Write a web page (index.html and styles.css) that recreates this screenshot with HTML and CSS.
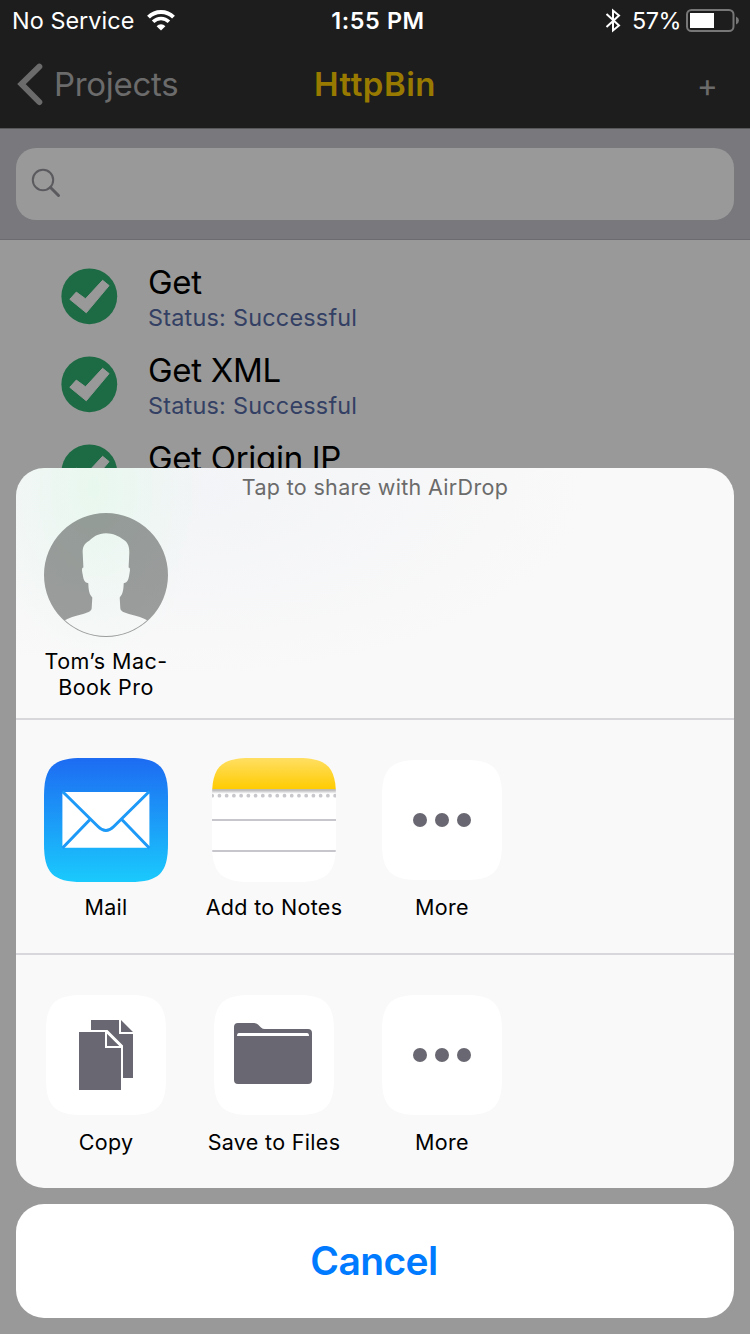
FILE: index.html
```html
<!DOCTYPE html>
<html lang="en">
<head>
<meta charset="utf-8">
<title>HttpBin</title>
<link rel="stylesheet" href="styles.css">
</head>
<body>
<div class="screen">
  <header class="header">
    <div class="status-bar">
      <div class="status-left">
        <span class="carrier">No Service</span>
        <svg class="wifi" width="28" height="21" viewBox="0 0 28 21" fill="none" stroke="#fff">
          <path d="M1.5 7.2A17.7 17.7 0 0 1 26.5 7.2" stroke-width="4"/>
          <path d="M6.1 11.8A11.2 11.2 0 0 1 21.9 11.8" stroke-width="3.6"/>
          <path d="M14 20.6L9.6 16.2A6.2 6.2 0 0 1 18.4 16.2Z" fill="#fff" stroke="none"/>
        </svg>
      </div>
      <span class="clock">1:55 PM</span>
      <div class="status-right">
        <svg class="bluetooth" width="16" height="26" viewBox="0 0 16 26" fill="none" stroke="#fff" stroke-width="2">
          <path d="M1.500 6L14 17.500L8 22.400V2.600L14 7.500L1.500 19"/>
        </svg>
        <span class="percent">57%</span>
        <svg class="battery" width="54" height="24" viewBox="0 0 54 24">
          <rect x="1" y="1" width="46.500" height="21" rx="4.500" fill="none" stroke="#777" stroke-width="2"/>
          <rect x="4" y="4" width="24" height="15" fill="#fff"/>
          <path d="M50 7.500Q53 9 53 11.500T50 15.500Z" fill="#777"/>
        </svg>
      </div>
    </div>
    <nav class="nav-bar">
      <div class="back">
        <svg width="26" height="44" viewBox="0 0 26 44" fill="none" stroke="#6b6b6b" stroke-width="6" stroke-linecap="round">
          <path d="M22.300 3.600L4.500 21L22.300 39"/>
        </svg>
        <span class="back-label">Projects</span>
      </div>
      <h1 class="title">HttpBin</h1>
      <span class="add">+</span>
    </nav>
  </header>

  <div class="search">
    <div class="field">
      <svg width="30" height="30" viewBox="0 0 30 30" fill="none" stroke="#5b5b5f">
        <circle cx="12" cy="12" r="10.200" stroke-width="2"/>
        <path d="M19.500 19.500L27.500 27.500" stroke-width="3" stroke-linecap="round"/>
      </svg>
    </div>
  </div>

  <main class="requests">
    <div class="request">
      <svg class="check" width="56" height="56" viewBox="-.3 -.3 56 56"><circle cx="28" cy="28" r="27.900" fill="#1d6b44"/><path d="M8.500 31L15 23.800L24.200 30.500L41.300 12L47.800 17.300L25 44.500Z" fill="#999" stroke="#999" stroke-linejoin="round"/></svg>
      <div class="request-text"><div class="request-name">Get</div><div class="request-status">Status: Successful</div></div>
    </div>
    <div class="request">
      <svg class="check" width="56" height="56" viewBox="-.3 -.3 56 56"><circle cx="28" cy="28" r="27.900" fill="#1d6b44"/><path d="M8.500 31L15 23.800L24.200 30.500L41.300 12L47.800 17.300L25 44.500Z" fill="#999" stroke="#999" stroke-linejoin="round"/></svg>
      <div class="request-text"><div class="request-name">Get XML</div><div class="request-status">Status: Successful</div></div>
    </div>
    <div class="request">
      <svg class="check" width="56" height="56" viewBox="-.3 -.3 56 56"><circle cx="28" cy="28" r="27.900" fill="#1d6b44"/><path d="M8.500 31L15 23.800L24.200 30.500L41.300 12L47.800 17.300L25 44.500Z" fill="#999" stroke="#999" stroke-linejoin="round"/></svg>
      <div class="request-text"><div class="request-name">Get Origin IP</div></div>
    </div>
  </main>

  <div class="share">
    <div class="sheet">
      <section class="airdrop">
        <div class="airdrop-title">Tap to share with AirDrop</div>
        <div class="cells">
          <div class="cell">
            <svg class="icon" width="124" height="124" viewBox="0 0 124 124">
              <path fill="#000" fill-opacity=".37" fill-rule="evenodd" d="M62 0A62 62 0 1 1 62 124A62 62 0 1 1 62 0ZM62 20.300C54 20.500 49 24 45.500 27.500C40 30.500 38.500 34 38.700 40L39.400 54.500C37.500 54.500 38 58 38.600 61C39.500 66 40 69.500 44.300 70.300C44.600 77 45 81 48.300 84.500L47.700 95C47.500 98 45 98.800 42 100C34 102.500 27 103.500 21 107.300A61.300 61.300 0 0 0 103 107.300C97 103.500 90 102.500 82 100C79 98.800 76.500 98 76.300 95L75.700 84.500C79 81 79.400 77 79.700 70.300C84 69.500 84.500 66 85.400 61C86 58 86.500 54.500 84.600 54.500L85.300 40C85.500 34 84 29.500 80 27C74 22.500 69 20.500 62 20.300Z"/>
            </svg>
            <div class="label device">Tom’s Mac-<br>Book Pro</div>
          </div>
        </div>
      </section>

      <section class="apps">
        <div class="cells">
          <div class="cell">
            <svg class="icon" width="124" height="124" viewBox="0 0 124 124">
              <defs><linearGradient id="mail-sky" x2="0" y2="1"><stop offset="0" stop-color="#1d6bf2"/><stop offset="1" stop-color="#1acafd"/></linearGradient></defs>
              <path fill="url(#mail-sky)" d="M38 0H86C115 0 124 9 124 38V86C124 115 115 124 86 124H38C9 124 0 115 0 86V38C0 9 9 0 38 0Z"/>
              <rect x="18.400" y="34" width="87" height="55.800" rx="2" fill="#fff"/>
              <path fill="none" stroke="#1d99f7" stroke-width="3" d="M18.500 33.500L54 68.500Q61.900 76.500 69.800 68.500L105.300 33.500M46 61.500L18.500 90M77.800 61.500L105.300 90"/>
            </svg>
            <div class="label">Mail</div>
          </div>
          <div class="cell">
            <svg class="icon" width="124" height="124" viewBox="0 0 124 124">
              <defs>
                <linearGradient id="notes-top" x2="0" y2="1"><stop offset="0" stop-color="#ffdf63"/><stop offset="1" stop-color="#ffcb00"/></linearGradient>
                <linearGradient id="notes-shade" x2="0" y2="1"><stop offset="0" stop-color="#aaa594"/><stop offset=".3" stop-color="#c3c3c7"/><stop offset="1" stop-color="#fff"/></linearGradient>
                <clipPath id="notes-shape"><path d="M38 0H86C115 0 124 9 124 38V86C124 115 115 124 86 124H38C9 124 0 115 0 86V38C0 9 9 0 38 0Z"/></clipPath>
              </defs>
              <g clip-path="url(#notes-shape)">
                <rect width="124" height="124" fill="#fff"/>
                <rect width="124" height="31.300" fill="url(#notes-top)"/>
                <rect y="31.300" width="124" height="4.500" fill="url(#notes-shade)"/>
                <path d="M.2 37.700H125" stroke="#c7c7cc" stroke-width="3.800" stroke-linecap="round" stroke-dasharray="0 7.230"/>
                <path d="M0 62H124M0 93H124" stroke="#c7c6cd" stroke-width="2"/>
              </g>
            </svg>
            <div class="label">Add to Notes</div>
          </div>
          <div class="cell">
            <svg class="icon" width="124" height="124" viewBox="-2 -2 124 124">
              <path fill="#fff" d="M36 0H84C111 0 120 9 120 36V84C120 111 111 120 84 120H36C9 120 0 111 0 84V36C0 9 9 0 36 0Z"/>
              <g fill="#696872"><circle cx="38" cy="60" r="7"/><circle cx="60" cy="60" r="7"/><circle cx="82" cy="60" r="7"/></g>
            </svg>
            <div class="label">More</div>
          </div>
        </div>
      </section>

      <section class="actions">
        <div class="cells">
          <div class="cell">
            <svg class="icon" width="124" height="124" viewBox="-2 -2 124 124">
              <path fill="#fff" d="M36 0H84C111 0 120 9 120 36V84C120 111 111 120 84 120H36C9 120 0 111 0 84V36C0 9 9 0 36 0Z"/>
              <path fill="#696872" d="M45 25H73V39H87V83H77V50.500L61.500 35H45ZM75 25L87 37H75ZM33 37H59V53H75V95H33ZM61 38.700L73.300 51H61Z"/>
            </svg>
            <div class="label">Copy</div>
          </div>
          <div class="cell">
            <svg class="icon" width="124" height="124" viewBox="-2 -2 124 124">
              <path fill="#fff" d="M36 0H84C111 0 120 9 120 36V84C120 111 111 120 84 120H36C9 120 0 111 0 84V36C0 9 9 0 36 0Z"/>
              <path fill="#696872" d="M24 28H40Q42.500 28 44 29.500L47 32.500Q48.500 34 51 34H94Q98 34 98 38V85Q98 89 94 89H24Q20 89 20 85V32Q20 28 24 28Z"/>
              <path fill="#fff" d="M25 38H93Q95 38 95 41H23Q23 38 25 38Z"/>
            </svg>
            <div class="label">Save to Files</div>
          </div>
          <div class="cell">
            <svg class="icon" width="124" height="124" viewBox="-2 -2 124 124">
              <path fill="#fff" d="M36 0H84C111 0 120 9 120 36V84C120 111 111 120 84 120H36C9 120 0 111 0 84V36C0 9 9 0 36 0Z"/>
              <g fill="#696872"><circle cx="38" cy="60" r="7"/><circle cx="60" cy="60" r="7"/><circle cx="82" cy="60" r="7"/></g>
            </svg>
            <div class="label">More</div>
          </div>
        </div>
      </section>
    </div>
    <div class="cancel"><span class="cancel-label">Cancel</span></div>
  </div>
</div>
</body>
</html>
```
FILE: styles.css
```css
* { box-sizing: border-box; }
body { margin: 0; font-family: Inter, "Liberation Sans", sans-serif; }
svg { display: block; flex: none; overflow: visible; }
.screen { position: relative; width: 750px; height: 1334px; overflow: hidden; background: #999; }

.header { height: 129px; background: #1d1d1d; border-bottom: 1px solid #58585a; }
.status-bar { display: grid; grid-template-columns: 1fr auto 1fr; height: 41px; align-items: center; color: #fff; font-size: 23.4px; line-height: 41px; white-space: nowrap; }
.status-left { display: flex; align-items: center; gap: 13px; padding-left: 12px; }
.status-right { display: flex; align-items: center; justify-content: flex-end; padding-right: 10px; }
.carrier { width: 122px; letter-spacing: .05px; }
.clock { padding-left: 6px; font-weight: 600; letter-spacing: .6px; }
.percent { width: 48px; margin: 0 6px 0 11px; letter-spacing: -.5px; }

.nav-bar { display: grid; grid-template-columns: 1fr auto 1fr; height: 87px; align-items: center; font-size: 33px; line-height: 87px; color: #6b6b6b; white-space: nowrap; }
.back { display: flex; align-items: center; gap: 11px; padding-left: 17px; }
.back-label { letter-spacing: -.3px; }
.title { margin: 0; font-size: 33px; font-weight: 600; color: #997a00; letter-spacing: .5px; }
.add { justify-self: end; padding: 1px 32px 0 0; font-size: 32px; line-height: 83px; }

.search { height: 111px; padding: 19px 16px; background: #79787d; border-bottom: 1px solid #6c6c70; }
.field { height: 72px; padding: 20px 15px; border-radius: 20px; background: #999; }

.requests { padding-top: 12px; }
.request { display: flex; height: 88px; padding: 16px 0 0 61px; gap: 31px; }
.request-text { white-space: nowrap; }
.request-name { height: 34px; margin-top: -6px; font-size: 33px; line-height: 40px; color: #000; letter-spacing: -.3px; }
.request-status { font-size: 23.4px; line-height: 32px; margin-top: 6px; color: #334064; letter-spacing: .23px; }

/* Modal share sheet, drawn over the request list */
.share { position: absolute; left: 16px; right: 16px; bottom: 16px; display: flex; flex-direction: column; gap: 16px; }
.sheet { height: 720px; border-radius: 28px; overflow: hidden; background: radial-gradient(ellipse 110px 170px at 78px 20px, rgba(230,248,237,.85), rgba(240,250,246,0)), radial-gradient(ellipse 400px 190px at 170px 20px, #f3f4f7, #f9f9f9); }
.airdrop { height: 250px; }
.airdrop-title { height: 45px; text-align: center; font-size: 21.5px; line-height: 39px; color: #6b6b6b; letter-spacing: .32px; }
.apps, .actions { border-top: 2px solid #d8d8dc; height: 235px; padding-top: 38px; }
.cells { display: flex; padding-left: 6px; }
.cell { display: flex; flex-direction: column; align-items: center; width: 168px; }
.label { margin-top: 12px; font-size: 21.5px; line-height: 26px; text-align: center; white-space: nowrap; color: #000; letter-spacing: .32px; }
.device { margin-top: 11px; letter-spacing: .45px; }
.cancel { display: flex; align-items: center; justify-content: center; height: 114px; border-radius: 28px; background: #fff; }
.cancel-label { padding-right: 2px; font-size: 39px; font-weight: 600; line-height: 50px; color: #007aff; letter-spacing: -.6px; }
```
